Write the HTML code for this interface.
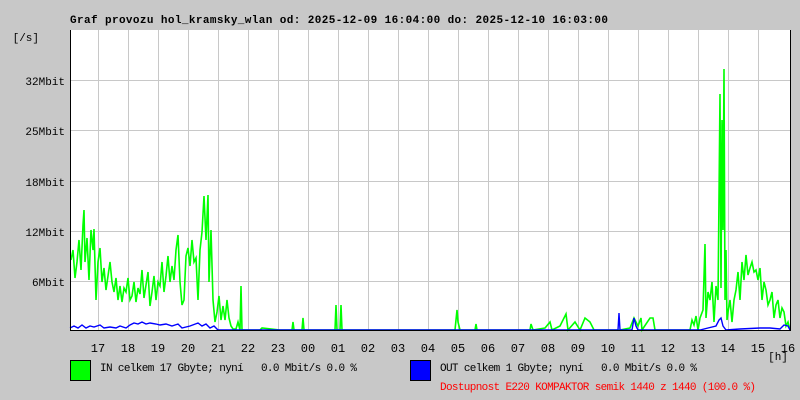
<!DOCTYPE html>
<html><head><meta charset="utf-8"><style>
body{margin:0;background:#c8c8c8;width:800px;height:400px;overflow:hidden;}
svg{position:absolute;left:0;top:0}
text{white-space:pre}
</style></head><body>
<svg width="800" height="400" xmlns="http://www.w3.org/2000/svg" font-family="Liberation Mono, monospace" font-size="10" xml:space="preserve">
<rect x="0" y="0" width="800" height="400" fill="#c8c8c8"/>
<rect x="70" y="30" width="720" height="300" fill="#fff"/>
<g stroke="#c8c8c8" stroke-width="1">
<path d="M98.5 30V330M128.5 30V330M158.5 30V330M188.5 30V330M218.5 30V330M248.5 30V330M278.5 30V330M308.5 30V330M338.5 30V330M368.5 30V330M398.5 30V330M428.5 30V330M458.5 30V330M488.5 30V330M518.5 30V330M548.5 30V330M578.5 30V330M608.5 30V330M638.5 30V330M668.5 30V330M698.5 30V330M728.5 30V330M758.5 30V330"/>
<path d="M70 80.5H790M70 130.5H790M70 181.5H790M70 231.5H790M70 281.5H790"/>
</g>
<polyline fill="none" stroke="#00ff00" stroke-width="1.6" points="71,260 73,250 75,278 77,262 79,240 81,270 83,225 84,210 85,262 87,238 89,280 91,230 93,250 94,229 96,300 98,262 100,248 102,282 104,268 106,290 108,276 110,262 112,282 114,292 116,278 118,300 120,286 122,302 124,288 126,292 128,278 130,300 132,296 134,282 136,302 138,288 140,294 142,270 144,298 146,285 148,272 150,306 152,292 154,276 156,300 158,282 160,286 162,262 164,292 166,276 168,256 170,282 172,266 174,280 176,250 178,235 180,282 182,305 184,300 186,256 188,248 190,266 192,240 194,262 196,258 198,300 200,250 202,232 204,196 206,240 208,195 209,282 211,230 213,300 215,322 217,312 219,296 221,320 223,306 225,320 227,300 229,318 231,326 233,329 236,329 238,322 240,330 241,286 242,330 260,330 262,328 280,330 292,330 293,322 294,330 302,330 303,318 304,330 335,330 336,305 337,330 340,330 341,305 342,330 380,330 455,330 457,310 458,322 460,330 475,330 476,324 477,330 530,330 531,324 533,330 545,328 550,322 552,330 560,326 566,314 568,330 575,322 580,330 585,318 590,322 594,330 620,330 630,328 634,318 638,326 641,318 642,330 650,318 653,318 655,330 690,330 692,320 694,325 696,316 698,330 700,318 703,310 705,244 706,318 708,292 710,300 712,282 714,322 716,286 718,300 720,94 721,288 722,120 723,230 724,69 725,300 726,250 727,320 728,312 730,300 732,322 734,300 736,290 738,272 740,300 742,262 744,280 746,255 748,275 750,268 752,262 754,272 756,270 758,280 760,268 762,300 764,282 766,290 768,305 770,300 772,292 774,318 776,305 778,300 780,318 782,308 784,312 786,326 788,322 790,330"/>
<polyline fill="none" stroke="#0000ff" stroke-width="1.4" points="70,328 74,326 78,328 82,325 86,328 90,326 94,327 100,325 104,328 110,327 116,328 120,326 126,328 130,325 134,323 138,324 142,322 146,324 150,323 156,324 160,325 166,324 172,326 178,324 182,328 190,326 198,323 202,326 206,324 210,328 214,326 218,330 600,330 618,330 619,313 620,330 632,330 634,318 636,326 638,330 700,330 708,328 716,326 719,320 721,318 723,326 726,330 740,329 760,328 770,328 780,329 784,325 788,326 790,330"/>
<path d="M70.5 30V330.5H790.5V30" fill="none" stroke="#000" stroke-width="1"/>
<text x="70" y="23" font-weight="bold" font-size="11" textLength="538" lengthAdjust="spacing">Graf provozu hol_kramsky_wlan od: 2025-12-09 16:04:00 do: 2025-12-10 16:03:00</text>
<g text-anchor="end" font-size="11"><text x="39" y="41">[/s]</text><text x="65" y="85">32Mbit</text><text x="65" y="135">25Mbit</text><text x="65" y="186">18Mbit</text><text x="65" y="236">12Mbit</text><text x="65" y="286">6Mbit</text></g>
<g text-anchor="middle" font-size="12"><text x="98" y="352">17</text><text x="128" y="352">18</text><text x="158" y="352">19</text><text x="188" y="352">20</text><text x="218" y="352">21</text><text x="248" y="352">22</text><text x="278" y="352">23</text><text x="308" y="352">00</text><text x="338" y="352">01</text><text x="368" y="352">02</text><text x="398" y="352">03</text><text x="428" y="352">04</text><text x="458" y="352">05</text><text x="488" y="352">06</text><text x="518" y="352">07</text><text x="548" y="352">08</text><text x="578" y="352">09</text><text x="608" y="352">10</text><text x="638" y="352">11</text><text x="668" y="352">12</text><text x="698" y="352">13</text><text x="728" y="352">14</text><text x="758" y="352">15</text><text x="788" y="352">16</text><text x="778" y="360" font-size="11">[h]</text></g>
<rect x="70.5" y="360.5" width="20" height="20" fill="#00ff00" stroke="#000"/>
<text x="100" y="371" font-size="11" textLength="257" lengthAdjust="spacing">IN celkem 17 Gbyte; nyní   0.0 Mbit/s 0.0 %</text>
<rect x="410.5" y="360.5" width="20" height="20" fill="#0000ff" stroke="#000"/>
<text x="440" y="371" font-size="11" textLength="257" lengthAdjust="spacing">OUT celkem 1 Gbyte; nyní   0.0 Mbit/s 0.0 %</text>
<text x="440" y="390" font-size="11" fill="#ff0000" textLength="316" lengthAdjust="spacing">Dostupnost E220 KOMPAKTOR semik 1440 z 1440 (100.0 %)</text>
</svg>
</body></html>
